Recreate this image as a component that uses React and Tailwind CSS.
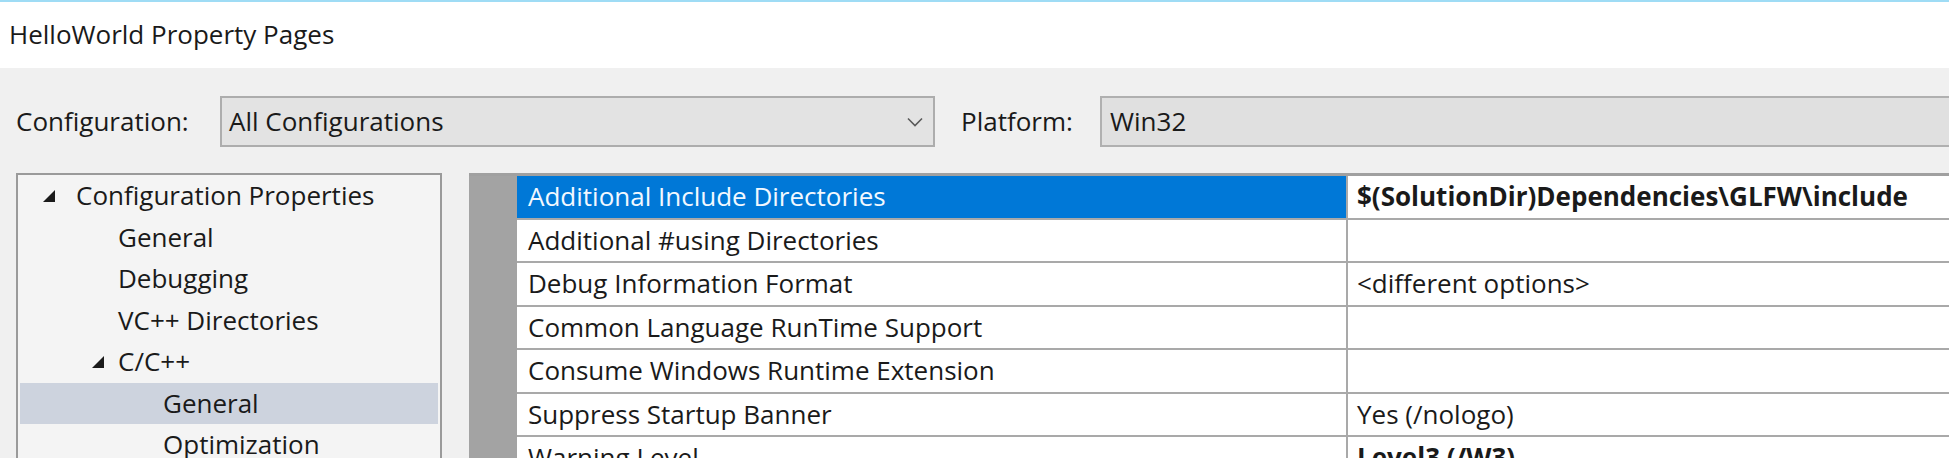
import React from "react";

const F = { fontFamily: '"Open Sans", "Noto Sans", sans-serif' };

function Tri() {
  return (
    <svg width="14" height="14" viewBox="0 0 14 14" className="shrink-0">
      <polygon points="13,1 13,13 1,13" fill="#1a1a1a" />
    </svg>
  );
}

const treeItems = [
  { label: "Configuration Properties", indent: 0, tri: true },
  { label: "General", indent: 1 },
  { label: "Debugging", indent: 1 },
  { label: "VC++ Directories", indent: 1 },
  { label: "C/C++", indent: 1, tri: true },
  { label: "General", indent: 2, selected: true },
  { label: "Optimization", indent: 2 },
];

const rows = [
  { name: "Additional Include Directories", value: "$(SolutionDir)Dependencies\\GLFW\\include", bold: true, selected: true },
  { name: "Additional #using Directories", value: "" },
  { name: "Debug Information Format", value: "<different options>" },
  { name: "Common Language RunTime Support", value: "" },
  { name: "Consume Windows Runtime Extension", value: "" },
  { name: "Suppress Startup Banner", value: "Yes (/nologo)" },
  { name: "Warning Level", value: "Level3 (/W3)", bold: true },
];

export default function App() {
  return (
    <div className="w-[1949px] h-[458px] overflow-hidden bg-[#f0f0f0] text-[#1a1a1a] flex flex-col" style={F}>
      <div className="h-[2px] bg-[#9fdcf5] shrink-0" />
      <div className="h-[66px] bg-white shrink-0 flex items-center pl-[9px] text-[26px] pb-[1px]">
        HelloWorld Property Pages
      </div>
      <div className="h-[28px] shrink-0" />
      <div className="h-[51px] shrink-0 flex items-center text-[26px]">
        <div className="w-[220px] pl-[16px] shrink-0 whitespace-nowrap">Configuration:</div>
        <div className="w-[715px] h-[51px] shrink-0 bg-[#e3e3e3] border-2 border-[#adadad] flex items-center pl-[7px] pr-[10px]">
          <span className="flex-1 whitespace-nowrap">All Configurations</span>
          <svg width="16" height="10" viewBox="0 0 16 10">
            <polyline points="1,1.5 8,8.5 15,1.5" fill="none" stroke="#5a5a5a" strokeWidth="1.6" />
          </svg>
        </div>
        <div className="w-[165px] pl-[26px] shrink-0 whitespace-nowrap">Platform:</div>
        <div className="w-[860px] h-[51px] shrink-0 bg-[#e0e0e0] border-y-2 border-l-2 border-[#b0b0b0] flex items-center pl-[8px]">
          Win32
        </div>
      </div>
      <div className="h-[26px] shrink-0" />
      <div className="flex flex-1 min-h-0">
        <div className="ml-[16px] w-[426px] shrink-0 border-x-2 border-t-2 border-[#9a9a9a] bg-[#f4f4f4] px-[2px] text-[26px]">
          {treeItems.map((it, i) => (
            <div
              key={i}
              className={`h-[41.5px] flex items-center ${it.selected ? "bg-[#cdd3de]" : ""}`}
            >
              <div className={`${it.indent === 0 ? "w-[56px] pl-[22px]" : it.indent === 1 ? "w-[98px] pl-[71px]" : "w-[143px]"} shrink-0 flex items-center`}>
                {it.tri ? <Tri /> : null}
              </div>
              <span className="whitespace-nowrap">{it.label}</span>
            </div>
          ))}
        </div>
        <div className="ml-[27px] flex-1 border-t-[3px] border-[#a0a0a0] flex">
          <div className="w-[48px] shrink-0 bg-[#a3a3a3]" />
          <div className="flex-1 bg-white text-[26px]">
            {rows.map((r, i) => (
              <div key={i} className="h-[43.5px] flex border-b-2 border-[#a9a9a9]">
                <div
                  className={`w-[829px] shrink-0 flex items-center pl-[11px] whitespace-nowrap ${r.selected ? "bg-[#0078d7] text-[#f2f8ff]" : ""}`}
                >
                  {r.name}
                </div>
                <div className={`flex-1 border-l-2 border-[#a9a9a9] flex items-center pl-[9px] whitespace-nowrap ${r.bold ? "font-bold" : ""}`}>
                  {r.value}
                </div>
              </div>
            ))}
          </div>
        </div>
      </div>
    </div>
  );
}
